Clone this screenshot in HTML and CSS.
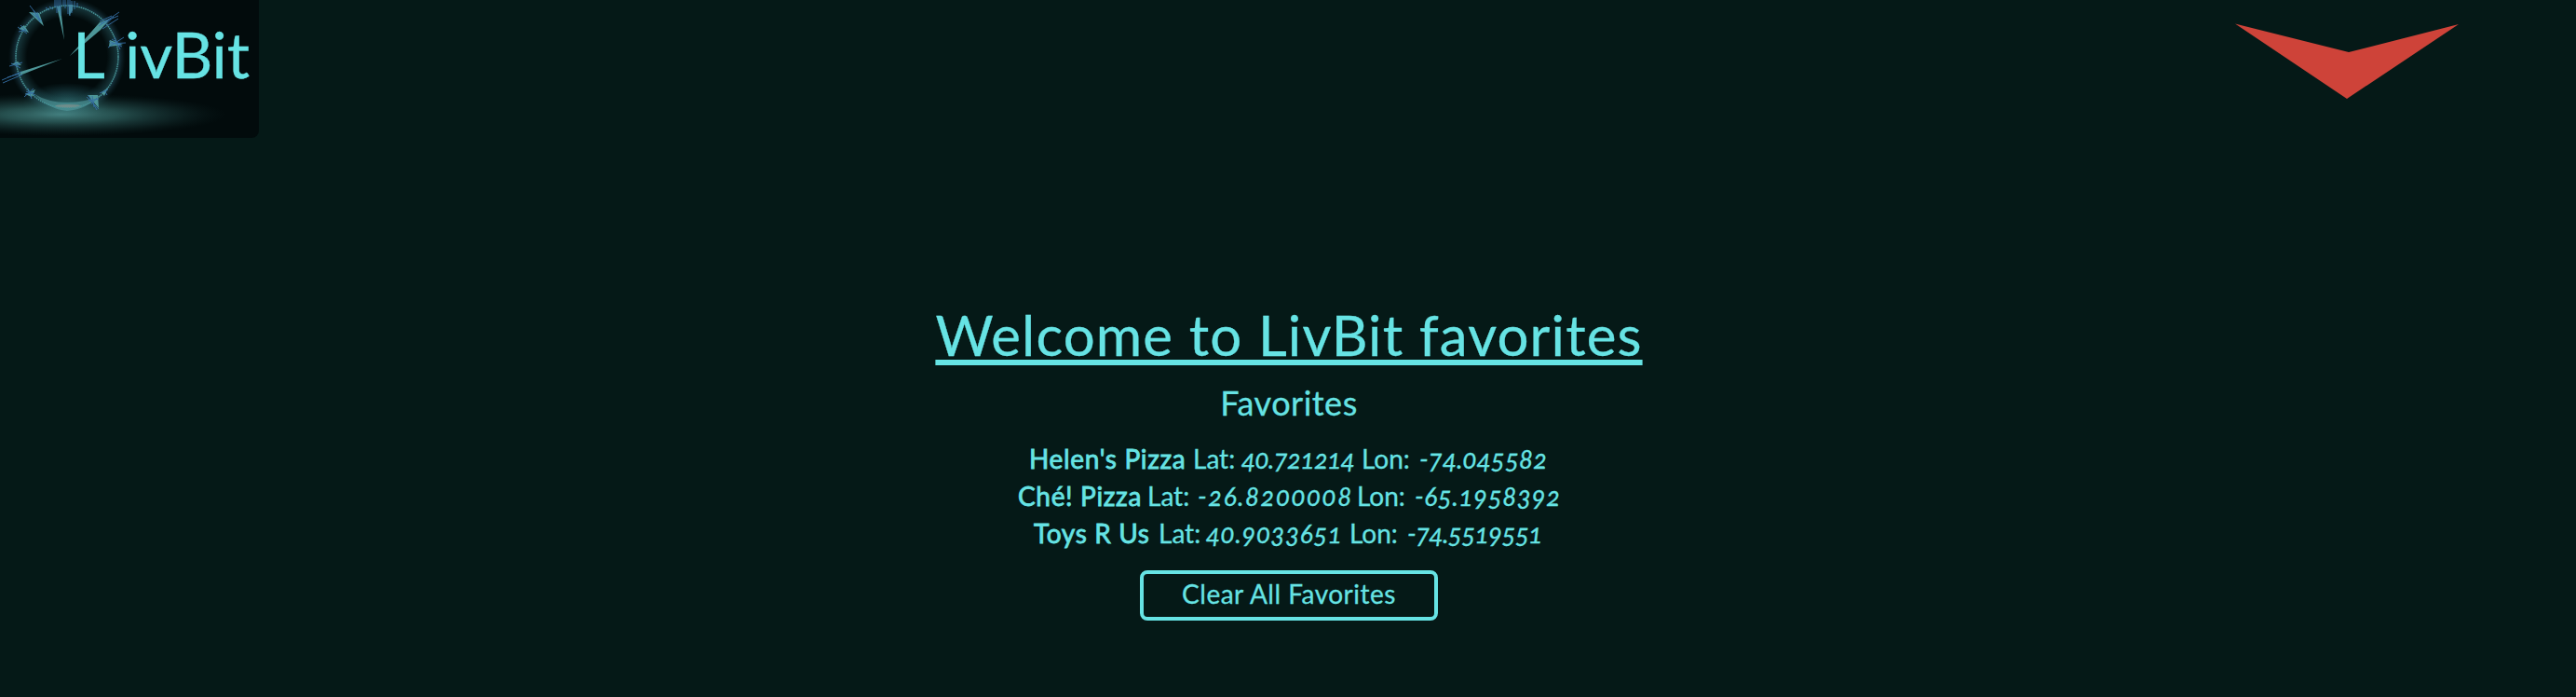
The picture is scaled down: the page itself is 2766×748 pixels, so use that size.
FILE: index.html
```html
<!DOCTYPE html>
<html lang="en">
<head>
<meta charset="utf-8">
<title>LivBit favorites</title>
<link rel="stylesheet" href="styles.css">
</head>
<body>
<header class="top">
  <div class="logo">
    <svg class="logo-art" viewBox="0 0 278 148" aria-hidden="true">
      <defs>
        <radialGradient id="floor"><stop offset="0" stop-color="#559e9d"/><stop offset=".35" stop-color="#397573" stop-opacity=".85"/><stop offset=".7" stop-color="#204646" stop-opacity=".5"/><stop offset="1" stop-color="#102828" stop-opacity="0"/></radialGradient>
        <radialGradient id="orb"><stop offset=".68" stop-color="#2a6068" stop-opacity="0"/><stop offset=".87" stop-color="#2c626b" stop-opacity=".5"/><stop offset=".9" stop-color="#2b5a70" stop-opacity=".4"/><stop offset="1" stop-color="#183840" stop-opacity="0"/></radialGradient>
        <radialGradient id="haze"><stop offset="0" stop-color="#347d85" stop-opacity=".75"/><stop offset="1" stop-color="#26606c" stop-opacity="0"/></radialGradient>
      </defs>
      <circle cx="72" cy="61" r="63" fill="url(#orb)"/>
      <ellipse cx="72" cy="109" rx="48" ry="20" fill="url(#haze)"/>
      <ellipse cx="65" cy="123" rx="178" ry="23" fill="url(#floor)" opacity=".75"/>
      <path d="M37 101Q52 110 72 110T108 102Q94 117 72 119Q52 117 37 101Z" fill="#57a6aa" opacity=".5"/>
      <ellipse cx="73" cy="114" rx="14" ry="2" fill="#82908c" opacity=".7"/>
      <circle cx="72" cy="61" r="55" fill="none" stroke="#468f93" stroke-width="1.5" stroke-dasharray="1.7 .7"/>
      <g fill="#4d9698">
        <path d="M61 7L69 43L65 7ZM74 5V17L78 11V5ZM31 13L47 28L42 14ZM75 60L107 24L118 20L108 32ZM67 63L21 81L22 77ZM20 31L31 35L26 27ZM117 50L132 48L118 43ZM12 69L23 70L19 66ZM27 101L38 96L34 104ZM94 102L106 116L105 102ZM109 99L116 94L112 103Z"/>
      </g>
      <g fill="none" stroke="#356fa5" stroke-width="1" opacity=".9">
        <path d="M59 0V8M61 0V14M63 0V12M65 0V17M68 0V6M70 0V9M73 0V15M75 0V17M77 1V14M80 1V10M83 3V8M53 7L57 10M49 8L53 11"/>
        <path d="M32 6L45 23M34 14L43 21M36 11L42 22M40 13L43 24M19 29L29 36M22 27L29 34M20 34L28 32"/>
        <path d="M106 28L128 13M108 25L127 17M110 31L127 20M107 23L120 17M112 27L122 18M116 51L133 40M117 44L131 50M120 42L130 48M118 47L135 46M123 40L129 53"/>
        <path d="M2 86L23 77M3 89L24 80M8 83L21 79M10 71L24 67M12 68L22 73M16 66L20 72M26 104L36 95M28 98L38 102M30 95L34 106M27 101L37 99"/>
        <path d="M93 104L106 117M95 108L106 106M95 102L104 118M99 103L101 115M104 105L98 112M107 100L116 96M112 97L115 102"/>
      </g>
    </svg>
    <div class="logo-name"><span class="logo-initial">L</span><span class="logo-rest">ivBit</span></div>
  </div>
  <svg class="chevron" viewBox="0 0 240 82" role="img" aria-label="Open menu"><path d="M0 .5L122 31L240 1L120 81Z"/></svg>
</header>
<main class="content">
  <h1 class="title">Welcome to LivBit favorites</h1>
  <h2 class="subtitle">Favorites</h2>
  <div class="places">
    <div class="place place-1"><b>Helen's Pizza</b><span>Lat:</span><i class="lat">40.721214</i><span>Lon:</span><i class="lon">-74.045582</i></div>
    <div class="place place-2"><b>Ché! Pizza</b><span>Lat:</span><i class="lat">-26.8200008</i><span>Lon:</span><i class="lon">-65.1958392</i></div>
    <div class="place place-3"><b>Toys R Us</b><span>Lat:</span><i class="lat">40.9033651</i><span>Lon:</span><i class="lon">-74.5519551</i></div>
  </div>
  <button class="clear">Clear All Favorites</button>
</main>
</body>
</html>
```
FILE: styles.css
```css
* { box-sizing: border-box; }
body {
  margin: 0;
  min-height: 748px;
  background: #051917;
  color: #66e3e4;
  font-family: Lato, "Open Sans", sans-serif;
  font-feature-settings: "onum";
  -webkit-text-stroke: .3px currentColor;
}
.top {
  display: flex;
  justify-content: space-between;
  align-items: flex-start;
  height: 326px;
  padding-right: 126px;
}
.logo {
  display: grid;
  width: 278px;
  height: 148px;
  overflow: hidden;
  border-radius: 0 0 8px 0;
  background: #020b0c;
}
.logo-art { grid-area: 1 / 1; width: 278px; height: 148px; }
.logo-name {
  grid-area: 1 / 1;
  display: flex;
  z-index: 1;
  padding: 17px 0 0 78px;
  font-size: 68px;
  line-height: 82px;
}
.logo-initial { width: 56px; }
.logo-rest { letter-spacing: -.1px; }
.chevron { width: 240px; height: 82px; margin-top: 25px; fill: #ce4339; }
.content {
  display: flex;
  flex-direction: column;
  align-items: center;
  padding-left: 2px;
}
.title {
  margin: 0 0 20px;
  font-size: 60px;
  font-weight: 400;
  line-height: 66px;
  letter-spacing: 1.15px;
  text-decoration: underline;
  text-decoration-thickness: 6px;
  text-underline-offset: 4px;
  text-decoration-skip-ink: none;
}
.subtitle {
  margin: 0 0 20px;
  font-size: 36px;
  font-weight: 400;
  line-height: 40px;
  letter-spacing: .5px;
}
.places { margin-bottom: 20px; font-size: 28px; line-height: 40px; }
.place { display: grid; width: 586px; white-space: nowrap; }
.place-1 { padding-left: 14px; grid-template-columns: 176px 52px 129px 62px auto; }
.place-2 { padding-left: 2px; grid-template-columns: 139px 54px 171px 62px auto; }
.place-3 { padding-left: 19px; grid-template-columns: 134px 51px 154px 62px auto; }
.place b { font-weight: 400; -webkit-text-stroke: .8px currentColor; letter-spacing: .65px; }
.place-1 .lat { letter-spacing: -.7px; }
.place-2 .lat { letter-spacing: 1.4px; }
.place-2 .lon { letter-spacing: .5px; }
.place-3 .lat { letter-spacing: .5px; }
.place-3 .lon { letter-spacing: -.7px; }
.clear {
  width: 320px;
  height: 54px;
  padding: 0 0 4px;
  border: 4px solid #66e3e4;
  border-radius: 8px;
  background: transparent;
  color: inherit;
  font: 28px/42px Lato, "Open Sans", sans-serif;
  letter-spacing: .5px;
}
```
